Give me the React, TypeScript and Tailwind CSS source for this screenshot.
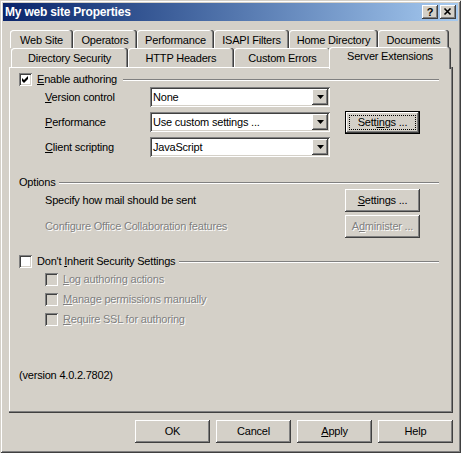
import React from 'react';

const raised =
  'shadow-[inset_-1px_-1px_#404040,inset_1px_1px_#ffffff,inset_-2px_-2px_#808080,inset_2px_2px_#d4d0c8]';
const sunken =
  'shadow-[inset_1px_1px_#808080,inset_-1px_-1px_#ffffff,inset_2px_2px_#404040,inset_-2px_-2px_#d4d0c8]';
const tabEdge = 'shadow-[inset_-1px_0_#404040,inset_-2px_0_#808080,inset_1px_1px_#ffffff]';
const grayText = 'text-[#808080] [text-shadow:1px_1px_0_#ffffff]';

function CheckBox({ checked, disabled }: { checked?: boolean; disabled?: boolean }) {
  return (
    <span
      className={`w-[13px] h-[13px] shrink-0 flex ${sunken} ${disabled ? 'bg-[#d4d0c8]' : 'bg-white'}`}
    >
      {checked && (
        <svg width="13" height="13" viewBox="0 0 13 13">
          <path d="M3 5L5 7L9 3L9 6L5 10L3 8Z" fill="#000" />
        </svg>
      )}
    </span>
  );
}

function Combo({ value }: { value: string }) {
  return (
    <div className={`w-[180px] h-[20px] bg-white flex items-stretch p-[2px] ${sunken}`}>
      <span className="flex-1 flex items-center pl-[1px]">{value}</span>
      <span className={`w-[16px] bg-[#d4d0c8] flex items-center justify-center ${raised}`}>
        <svg width="7" height="4" viewBox="0 0 7 4">
          <path d="M0 0H7L3.5 4Z" fill="#000" />
        </svg>
      </span>
    </div>
  );
}

function Button({
  children,
  disabled,
  isDefault,
}: {
  children: React.ReactNode;
  disabled?: boolean;
  isDefault?: boolean;
}) {
  if (isDefault) {
    return (
      <div className="w-[75px] h-[23px] shrink-0 border border-black flex">
        <div className={`flex-1 flex p-[3px] ${raised}`}>
          <span className="flex-1 border border-dotted border-black flex items-center justify-center">
            {children}
          </span>
        </div>
      </div>
    );
  }
  return (
    <div
      className={`w-[75px] h-[23px] shrink-0 flex items-center justify-center ${raised} ${
        disabled ? grayText : ''
      }`}
    >
      {children}
    </div>
  );
}

function Tab({ label, w, selected, top }: { label: string; w: string; selected?: boolean; top?: boolean }) {
  if (selected) {
    return (
      <div
        className={`relative z-10 ml-[-2px] mb-[-2px] h-[22px] ${w} bg-[#d4d0c8] rounded-t-[3px] flex items-center justify-center pb-[3px] ${tabEdge}`}
      >
        {label}
      </div>
    );
  }
  return (
    <div
      className={`h-full ${w} rounded-t-[3px] flex items-center justify-center ${
        top ? 'pt-[3px]' : 'pt-[1px]'
      } ${tabEdge}`}
    >
      {label}
    </div>
  );
}

function Etched({ className = '' }: { className?: string }) {
  return <div className={`flex-1 h-px bg-[#808080] shadow-[0_1px_0_#ffffff] ${className}`} />;
}

export default function App() {
  return (
    <div
      className={`w-[461px] h-[453px] bg-[#d4d0c8] p-[3px] flex flex-col text-[11px] leading-[13px] tracking-[-0.2px] text-black font-['Liberation_Sans',Arial,sans-serif] shadow-[inset_1px_1px_#d4d0c8,inset_-1px_-1px_#404040,inset_2px_2px_#ffffff,inset_-2px_-2px_#808080]`}
    >
      {/* Title bar */}
      <div className="h-[18px] flex items-center bg-linear-to-r from-[#0a246a] to-[#a6caf0] pl-[2px] pr-[2px]">
        <span className="text-white font-bold text-[12px]">My web site Properties</span>
        <div className="ml-auto flex gap-[2px]">
          <span
            className={`w-[16px] h-[14px] bg-[#d4d0c8] flex items-center justify-center font-bold text-[11px] ${raised}`}
          >
            ?
          </span>
          <span className={`w-[16px] h-[14px] bg-[#d4d0c8] flex items-center justify-center ${raised}`}>
            <svg width="16" height="14" viewBox="0 0 16 14">
              <path d="M4.5 3.5L10.5 9.5M10.5 3.5L4.5 9.5" stroke="#000" strokeWidth="1.6" />
            </svg>
          </span>
        </div>
      </div>

      <div className="flex flex-col pl-[6px] pt-[9px]">
        {/* Tabs */}
        <div className="flex h-[18px] ml-[1px]">
          <Tab label="Web Site" w="w-[63px]" top />
          <Tab label="Operators" w="w-[64px]" top />
          <Tab label="Performance" w="w-[77px]" top />
          <Tab label="ISAPI Filters" w="w-[75px]" top />
          <Tab label="Home Directory" w="w-[89px]" top />
          <Tab label="Documents" w="w-[71px]" top />
        </div>
        <div className="flex items-end h-[19px] ml-[2px]">
          <Tab label="Directory Security" w="w-[117px]" />
          <Tab label="HTTP Headers" w="w-[106px]" />
          <Tab label="Custom Errors" w="w-[97px]" />
          <Tab label="Server Extensions" w="w-[122px]" selected />
        </div>

        {/* Panel */}
        <div
          className="w-[444px] h-[346px] flex flex-col pl-[10px] pr-[14px] pt-[6px] shadow-[inset_-1px_-1px_#404040,inset_-2px_-2px_#808080,inset_1px_1px_#ffffff]"
        >
          <div className="flex items-center h-[13px]">
            <CheckBox checked />
            <span className="ml-[5px]">
              <u>E</u>nable authoring
            </span>
            <Etched className="ml-[6px]" />
          </div>

          <div className="flex flex-col gap-[5px] mt-[1px] pl-[26px]">
            <div className="flex items-center h-[20px]">
              <span className="w-[105px]">
                <u>V</u>ersion control
              </span>
              <Combo value="None" />
            </div>
            <div className="flex items-center h-[20px]">
              <span className="w-[105px]">
                <u>P</u>erformance
              </span>
              <Combo value="Use custom settings ..." />
              <div className="ml-[15px]">
                <Button isDefault>
                  Sett<u>in</u>gs ...
                </Button>
              </div>
            </div>
            <div className="flex items-center h-[20px]">
              <span className="w-[105px]">
                <u>C</u>lient scripting
              </span>
              <Combo value="JavaScript" />
            </div>
          </div>

          <div className="flex items-center h-[13px] mt-[19px]">
            <span>Options</span>
            <Etched className="ml-[3px]" />
          </div>

          <div className="flex flex-col gap-[3px] pl-[26px]">
            <div className="flex items-center h-[23px]">
              <span className="w-[300px]">Specify how mail should be sent</span>
              <Button>
                <u>S</u>ettings ...
              </Button>
            </div>
            <div className="flex items-center h-[23px]">
              <span className={`w-[300px] ${grayText}`}>Configure Office Collaboration features</span>
              <Button disabled>
                A<u>d</u>minister ...
              </Button>
            </div>
          </div>

          <div className="flex items-center h-[13px] mt-[17px]">
            <CheckBox />
            <span className="ml-[5px]">
              Don't <u>I</u>nherit Security Settings
            </span>
            <Etched className="ml-[4px]" />
          </div>

          <div className="flex flex-col gap-[7px] mt-[5px] pl-[26px]">
            <div className="flex items-center h-[13px]">
              <CheckBox disabled />
              <span className={`ml-[5px] ${grayText}`}>
                <u>L</u>og authoring actions
              </span>
            </div>
            <div className="flex items-center h-[13px]">
              <CheckBox disabled />
              <span className={`ml-[5px] ${grayText}`}>
                <u>M</u>anage permissions manually
              </span>
            </div>
            <div className="flex items-center h-[13px]">
              <CheckBox disabled />
              <span className={`ml-[5px] ${grayText}`}>
                <u>R</u>equire SSL for authoring
              </span>
            </div>
          </div>

          <div className="mt-[43px]">(version 4.0.2.7802)</div>
        </div>

        {/* Dialog buttons */}
        <div className="w-[444px] flex justify-end gap-[6px] mt-[7px]">
          <Button>OK</Button>
          <Button>Cancel</Button>
          <Button>
            <u>A</u>pply
          </Button>
          <Button>Help</Button>
        </div>
      </div>
    </div>
  );
}
